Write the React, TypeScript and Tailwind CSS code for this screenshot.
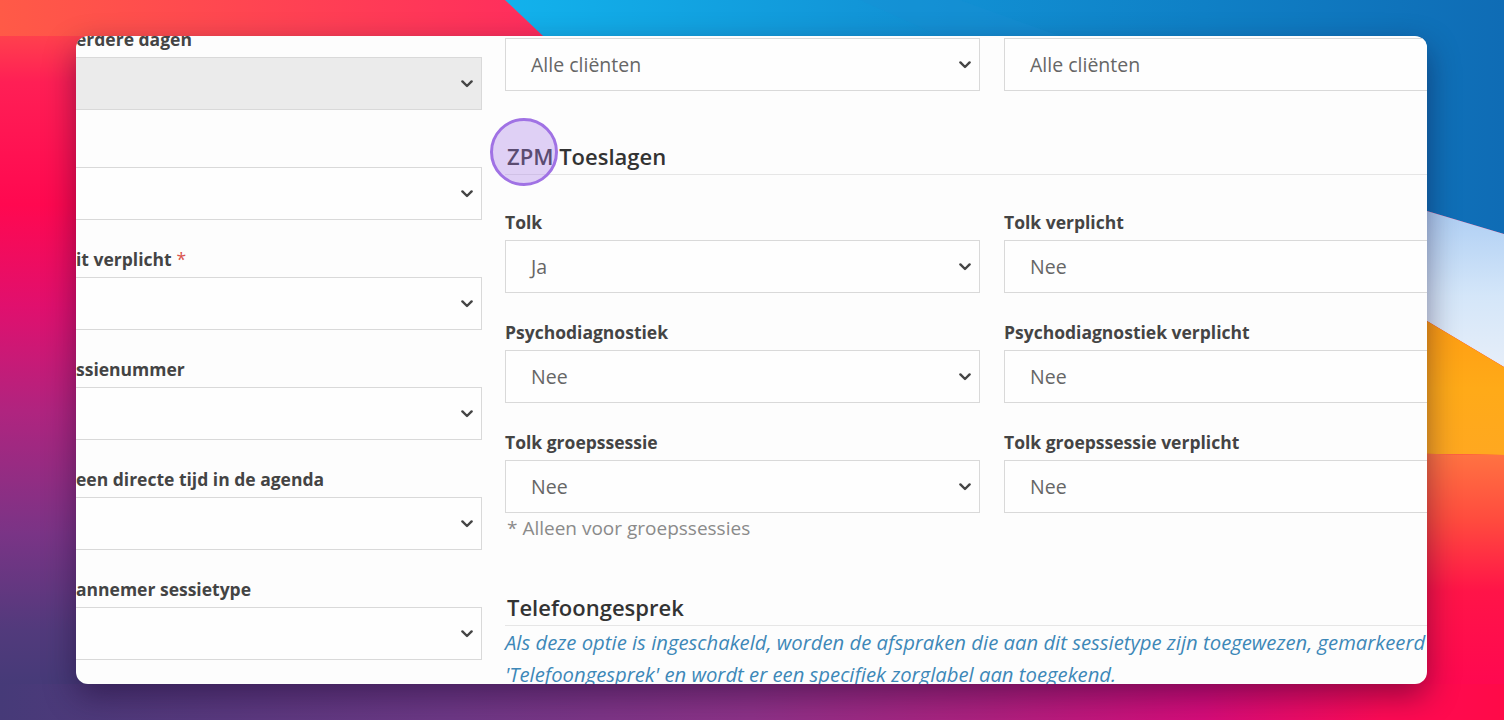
import React from 'react';

type Field = { label: string; value?: string; required?: boolean; disabled?: boolean };

const sideFields: Field[] = [
  { label: 'erdere dagen', disabled: true },
  { label: '' },
  { label: 'it verplicht', required: true },
  { label: 'ssienummer' },
  { label: 'een directe tijd in de agenda' },
  { label: 'annemer sessietype' },
];

const toeslagen: [Field, Field][] = [
  [
    { label: 'Tolk', value: 'Ja' },
    { label: 'Tolk verplicht', value: 'Nee' },
  ],
  [
    { label: 'Psychodiagnostiek', value: 'Nee' },
    { label: 'Psychodiagnostiek verplicht', value: 'Nee' },
  ],
  [
    { label: 'Tolk groepssessie', value: 'Nee' },
    { label: 'Tolk groepssessie verplicht', value: 'Nee' },
  ],
];

function Chevron() {
  return (
    <svg width="12" height="8" viewBox="0 0 12 8" className="shrink-0">
      <polyline
        points="1.4,1.4 6,6 10.6,1.4"
        fill="none"
        stroke="#454545"
        strokeWidth="2.4"
        strokeLinecap="round"
        strokeLinejoin="round"
      />
    </svg>
  );
}

function Select({ value, disabled, open }: { value?: string; disabled?: boolean; open?: boolean }) {
  return (
    <div
      className={`flex h-[53px] items-center justify-between border border-[#d9d9d9] pl-[25px] pr-[8px] ${
        disabled ? 'bg-[#ebebeb]' : 'bg-[#fefefe]'
      } ${open ? 'border-l-0' : ''}`}
    >
      <span className="text-[19.5px] text-[#666]">{value}</span>
      <Chevron />
    </div>
  );
}

function Label({ text, required }: { text: string; required?: boolean }) {
  return (
    <div className="mb-[6px] h-[24px] whitespace-nowrap text-[17.5px] leading-[24px] font-bold text-[#444]">
      {text}
      {required && <span className="ml-[5px] font-normal text-[#d9534f]">*</span>}
    </div>
  );
}

function Wallpaper() {
  return (
    <svg className="absolute inset-0" width="1504" height="720" viewBox="0 0 1504 720">
      <defs>
        <linearGradient id="wpTop" x1="0" y1="0" x2="1" y2="0">
          <stop offset="0" stopColor="#ff5a47" />
          <stop offset="1" stopColor="#ff2b5e" />
        </linearGradient>
        <linearGradient id="wpLeft" x1="0" y1="0" x2="0" y2="1">
          <stop offset="0" stopColor="#ff5a47" />
          <stop offset="0.12" stopColor="#ff1f55" />
          <stop offset="0.3" stopColor="#ff0850" />
          <stop offset="0.45" stopColor="#e0106e" />
          <stop offset="0.6" stopColor="#b0247f" />
          <stop offset="0.78" stopColor="#7a3486" />
          <stop offset="0.92" stopColor="#523a7c" />
          <stop offset="1" stopColor="#463a78" />
        </linearGradient>
        <linearGradient id="wpBlue" x1="0" y1="0" x2="1" y2="0">
          <stop offset="0" stopColor="#12b2ec" />
          <stop offset="0.35" stopColor="#1296d8" />
          <stop offset="0.7" stopColor="#0f80c6" />
          <stop offset="1" stopColor="#0f6cb5" />
        </linearGradient>
        <linearGradient id="wpSky" x1="0" y1="0" x2="0" y2="1">
          <stop offset="0" stopColor="#a4c8f2" />
          <stop offset="0.6" stopColor="#d4e6f9" />
          <stop offset="1" stopColor="#e6eef9" />
        </linearGradient>
        <linearGradient id="wpSun" x1="0" y1="0" x2="0" y2="1">
          <stop offset="0" stopColor="#ff9810" />
          <stop offset="0.6" stopColor="#ffaa18" />
          <stop offset="1" stopColor="#ffa820" />
        </linearGradient>
        <linearGradient id="wpRed" x1="0" y1="0" x2="0" y2="1">
          <stop offset="0" stopColor="#ff7442" />
          <stop offset="0.3" stopColor="#ff4a3e" />
          <stop offset="0.6" stopColor="#ff1448" />
          <stop offset="1" stopColor="#ff0850" />
        </linearGradient>
        <linearGradient id="wpBottom" x1="0" y1="0" x2="1" y2="0">
          <stop offset="0" stopColor="#463a78" />
          <stop offset="0.3" stopColor="#6e3886" />
          <stop offset="0.5" stopColor="#8e3288" />
          <stop offset="0.66" stopColor="#b0207f" />
          <stop offset="0.8" stopColor="#d80c7a" />
          <stop offset="0.92" stopColor="#ff0a55" />
          <stop offset="1" stopColor="#ff0a48" />
        </linearGradient>
      </defs>
      <rect x="0" y="0" width="1504" height="720" fill="url(#wpBottom)" />
      <rect x="0" y="0" width="420" height="684" fill="url(#wpLeft)" />
      <rect x="0" y="0" width="560" height="36" fill="url(#wpTop)" />
      <polygon points="505,0 1504,0 1504,234 1427,211 1300,190 700,200 600,90" fill="url(#wpBlue)" />
      <polygon points="860,0 960,0 1060,36 940,36" fill="#1a8fd4" opacity="0.35" />
      <polygon points="1300,188 1427,211 1504,234 1504,367 1427,321 1300,290" fill="url(#wpSky)" />
      <polygon points="1300,290 1427,321 1504,367 1504,455 1300,452" fill="url(#wpSun)" />
      <polygon points="1300,452 1504,455 1504,684 1300,684" fill="url(#wpRed)" />
    </svg>
  );
}

export default function App() {
  return (
    <div
      className="relative h-[720px] w-[1504px] overflow-hidden pl-[76px] pt-[36px]"
      style={{ fontFamily: '"Open Sans", "Noto Sans", sans-serif' }}
    >
      <Wallpaper />

      {/* Settings window */}
      <div className="relative flex h-[648px] w-[1351px] overflow-hidden rounded-[12px] bg-[#fdfdfd] shadow-[0_12px_32px_rgba(20,0,40,0.45)]">
        {/* Left column, scrolled partly out of view */}
        <div className="mt-[-9px] flex w-[406px] shrink-0 flex-col gap-[27px]">
          {sideFields.map((f, i) => (
            <div key={i}>
              <Label text={f.label} required={f.required} />
              <Select disabled={f.disabled} open />
            </div>
          ))}
        </div>

        <div className="ml-[23px] flex w-[974px] shrink-0 flex-col">
          <div className="mt-[2px] grid grid-cols-2 gap-x-[24px]">
            <Select value="Alle cliënten" />
            <Select value="Alle cliënten" />
          </div>

          {/* ZPM Toeslagen */}
          <div className="mt-[49px] border-b border-[#e6e6e6] pb-[2px]">
            <h2 className="relative h-[32px] pl-[2px] text-[22px] leading-[32px] font-semibold text-[#333]">
              ZPM Toeslagen
              <span className="absolute left-[-15px] top-[-22px] h-[68px] w-[68px] rounded-full border-[3px] border-[#a072e4] bg-[#a57be6]/35" />
            </h2>
          </div>

          <div className="mt-[35px] grid grid-cols-2 gap-x-[24px] gap-y-[27px]">
            {toeslagen.map((row, i) =>
              row.map((f, j) => (
                <div key={`${i}-${j}`}>
                  <Label text={f.label} />
                  <Select value={f.value} />
                </div>
              ))
            )}
          </div>
          <p className="mt-[3px] h-[24px] pl-[2px] text-[19px] leading-[24px] text-[#8a8a8a]">* Alleen voor groepssessies</p>

          {/* Telefoongesprek */}
          <div className="mt-[51px] border-b border-[#e6e6e6] pb-[2px]">
            <h2 className="h-[32px] pl-[2px] text-[22px] leading-[32px] font-semibold text-[#333]">Telefoongesprek</h2>
          </div>
          <div className="text-[20.3px] leading-[32px] italic text-[#3d88b8]">
            <div className="whitespace-nowrap">
              Als deze optie is ingeschakeld, worden de afspraken die aan dit sessietype zijn toegewezen, gemarkeerd als
            </div>
            <div className="whitespace-nowrap">'Telefoongesprek' en wordt er een specifiek zorglabel aan toegekend.</div>
          </div>
        </div>
      </div>
    </div>
  );
}
